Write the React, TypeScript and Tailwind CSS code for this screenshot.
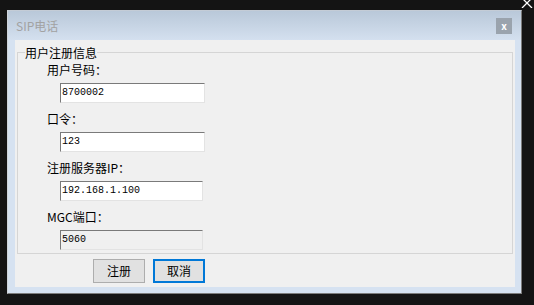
import React from "react";

const cjk = "font-['SimSun','Noto_Sans_CJK_SC',sans-serif]";

const Field = ({
  label,
  value,
  width = "w-[145px]",
  disabled = false,
}: {
  label: string;
  value: string;
  width?: string;
  disabled?: boolean;
}) => (
  <div className="flex flex-col">
    <div className="h-[16px] pl-[29px] text-[12px] leading-[16px] text-black">{label}</div>
    <div
      className={`mt-[5px] ml-[42px] h-[20px] ${width} border border-t-[#7a7a7a] border-l-[#7a7a7a] border-b-[#e3e3e3] border-r-[#e3e3e3] ${
        disabled ? "bg-[#f0f0f0]" : "bg-white"
      } pl-[1px] font-['Liberation_Mono',monospace] text-[10px] leading-[18px] text-black`}
    >
      {value}
    </div>
  </div>
);

export default function App() {
  return (
    <div className={`relative h-[305px] w-[534px] overflow-hidden bg-[#141414] pl-[7px] pt-[10px] ${cjk}`}>
      {/* stray close glyph from the window behind */}
      <svg className="absolute right-0 top-0" width="13" height="8" viewBox="0 0 13 8">
        <path d="M1 8 L11 -2 M1 -2 L11 8" stroke="#ffffff" strokeWidth="1.3" fill="none" />
      </svg>

      <div className="flex h-[284px] w-[515px] flex-col border border-l-[#cfd4da] border-t-[#c4ccd6] border-r-[#7c7c7c] border-b-[#7c7c7c] bg-[#d6e2f1]">
        {/* title bar */}
        <div className="flex h-[29px] items-center justify-between bg-gradient-to-b from-[#b9c8d9] to-[#d4e0ef] pl-[8px] pr-[9px]">
          <span className="font-['Noto_Sans_CJK_SC',sans-serif] text-[12px] text-[#a2a2a2]">SIP电话</span>
          <div className="mt-[1px] flex h-[16px] w-[16px] items-center justify-center bg-[#9aa3ad] text-[10px] font-bold leading-none text-white">
            x
          </div>
        </div>

        {/* client area */}
        <div className="ml-[7px] mr-[6px] flex h-[247px] flex-col bg-[#f0f0f0] px-[2px] pt-[6px]">
          <fieldset className="border border-[#d5d5d5] px-0 pb-[3px]">
            <legend className="ml-[7px] px-0 text-[12px] leading-[13px] text-black">用户注册信息</legend>
            <div className="flex flex-col gap-[8px] pt-[3px]">
              <Field label="用户号码：" value="8700002" />
              <Field label="口令：" value="123" />
              <Field label="注册服务器IP：" value="192.168.1.100" width="w-[143px]" />
              <Field label="MGC端口：" value="5060" width="w-[143px]" disabled />
            </div>
          </fieldset>

          <div className="mt-[5px] flex gap-[8px] pl-[76px]">
            <button
              type="button"
              className="h-[24px] w-[52px] border border-[#adadad] bg-[#e1e1e1] text-[12px] text-black"
            >
              注册
            </button>
            <button
              type="button"
              className="h-[24px] w-[52px] border-2 border-[#0078d7] bg-[#e1e1e1] text-[12px] text-black"
            >
              取消
            </button>
          </div>
        </div>
      </div>
    </div>
  );
}
